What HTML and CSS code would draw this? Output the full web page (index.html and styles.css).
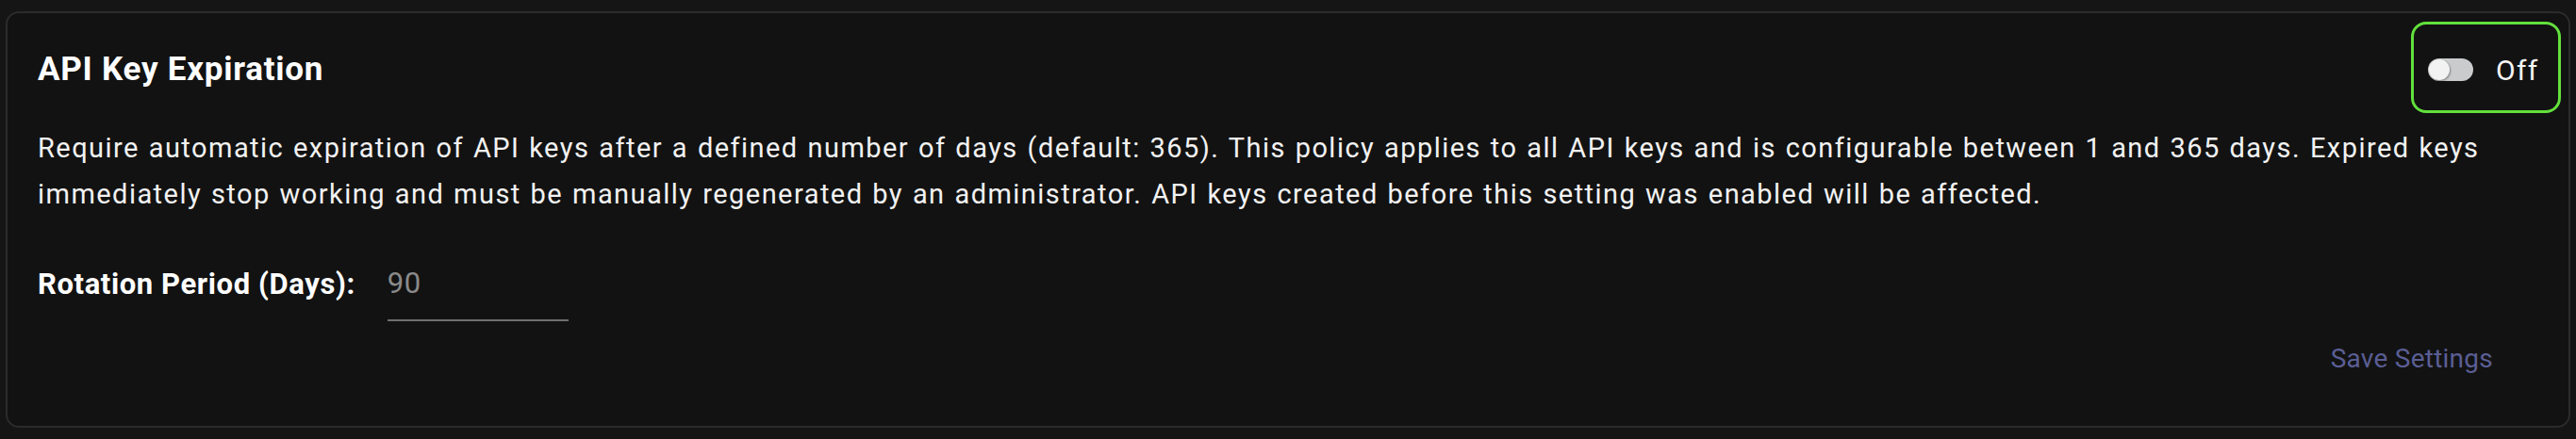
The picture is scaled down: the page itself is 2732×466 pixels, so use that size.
FILE: index.html
```html
<!DOCTYPE html>
<html lang="en">
<head>
<meta charset="utf-8">
<title>API Key Expiration</title>
<link rel="stylesheet" href="styles.css">
</head>
<body>
  <section class="card">
    <header class="card-header">
      <h2 class="title">API Key Expiration</h2>
      <label class="toggle-box">
        <span class="track"><span class="knob"></span></span>
        <span class="toggle-text">Off</span>
      </label>
    </header>
    <p class="description">Require automatic expiration of API keys after a defined number of days (default: 365). This policy applies to all API keys and is configurable between 1 and 365 days. Expired keys immediately stop working and must be manually regenerated by an administrator. API keys created before this setting was enabled will be affected.</p>
    <div class="field-row">
      <span class="field-label">Rotation Period (Days):</span>
      <input class="field-input" type="text" placeholder="90">
    </div>
    <div class="footer">
      <button class="save-btn" type="button">Save Settings</button>
    </div>
  </section>
</body>
</html>
```

FILE: styles.css
```css
html, body {
  margin: 0;
  background: #151515;
}
body {
  padding: 12px 6px 12px 6px;
  font-family: Roboto, "Liberation Sans", sans-serif;
  color: #f2f2f2;
}
.card {
  box-sizing: border-box;
  height: 442px;
  background: #121212;
  border: 2px solid #2b2b2b;
  border-radius: 14px;
  padding: 9px 8px 0 32px;
}
.card-header {
  display: flex;
  justify-content: space-between;
  align-items: center;
  height: 97px;
}
.title {
  margin: 0;
  font-size: 35px;
  font-weight: 700;
  letter-spacing: 0.75px;
  color: #ffffff;
  padding-top: 3px;
}
.toggle-box {
  box-sizing: border-box;
  width: 159px;
  height: 97px;
  border: 3px solid #62e03c;
  border-radius: 16px;
  display: flex;
  align-items: center;
  padding: 5px 0 0 15px;
  gap: 24px;
}
.track {
  box-sizing: border-box;
  width: 48px;
  height: 24px;
  border-radius: 12px;
  background: #c9cbcd;
  display: flex;
  align-items: center;
  padding: 0 1px;
}
.knob {
  width: 22px;
  height: 22px;
  border-radius: 50%;
  background: #f2f2f2;
  box-shadow: 1px 1px 2px rgba(0, 0, 0, 0.35);
}
.toggle-text {
  font-size: 30px;
  letter-spacing: 1.3px;
  color: #f5f5f5;
}
.description {
  margin: 13px 24px 0 0;
  font-size: 29px;
  line-height: 49px;
  letter-spacing: 1.45px;
  word-spacing: 1.2px;
  color: #f2f2f2;
}
.field-row {
  display: flex;
  align-items: center;
  gap: 34px;
  margin-top: 30px;
}
.field-label {
  font-size: 31px;
  font-weight: 700;
  letter-spacing: 0.6px;
  color: #ffffff;
}
.field-input {
  box-sizing: border-box;
  width: 192px;
  height: 80px;
  padding: 0;
  background: transparent;
  border: none;
  border-bottom: 2px solid #6e6e6e;
  font-family: Roboto, "Liberation Sans", sans-serif;
  font-size: 31px;
  letter-spacing: 0.5px;
  color: #8a8a8a;
  outline: none;
}
.field-input::placeholder {
  color: #8a8a8a;
}
.footer {
  display: flex;
  justify-content: flex-end;
  margin-top: 11px;
  padding-right: 22px;
}
.save-btn {
  height: 56px;
  padding: 0 50px;
  background: transparent;
  border: none;
  font-family: Roboto, "Liberation Sans", sans-serif;
  font-size: 28px;
  letter-spacing: 0.25px;
  color: #5a5e94;
}
```
